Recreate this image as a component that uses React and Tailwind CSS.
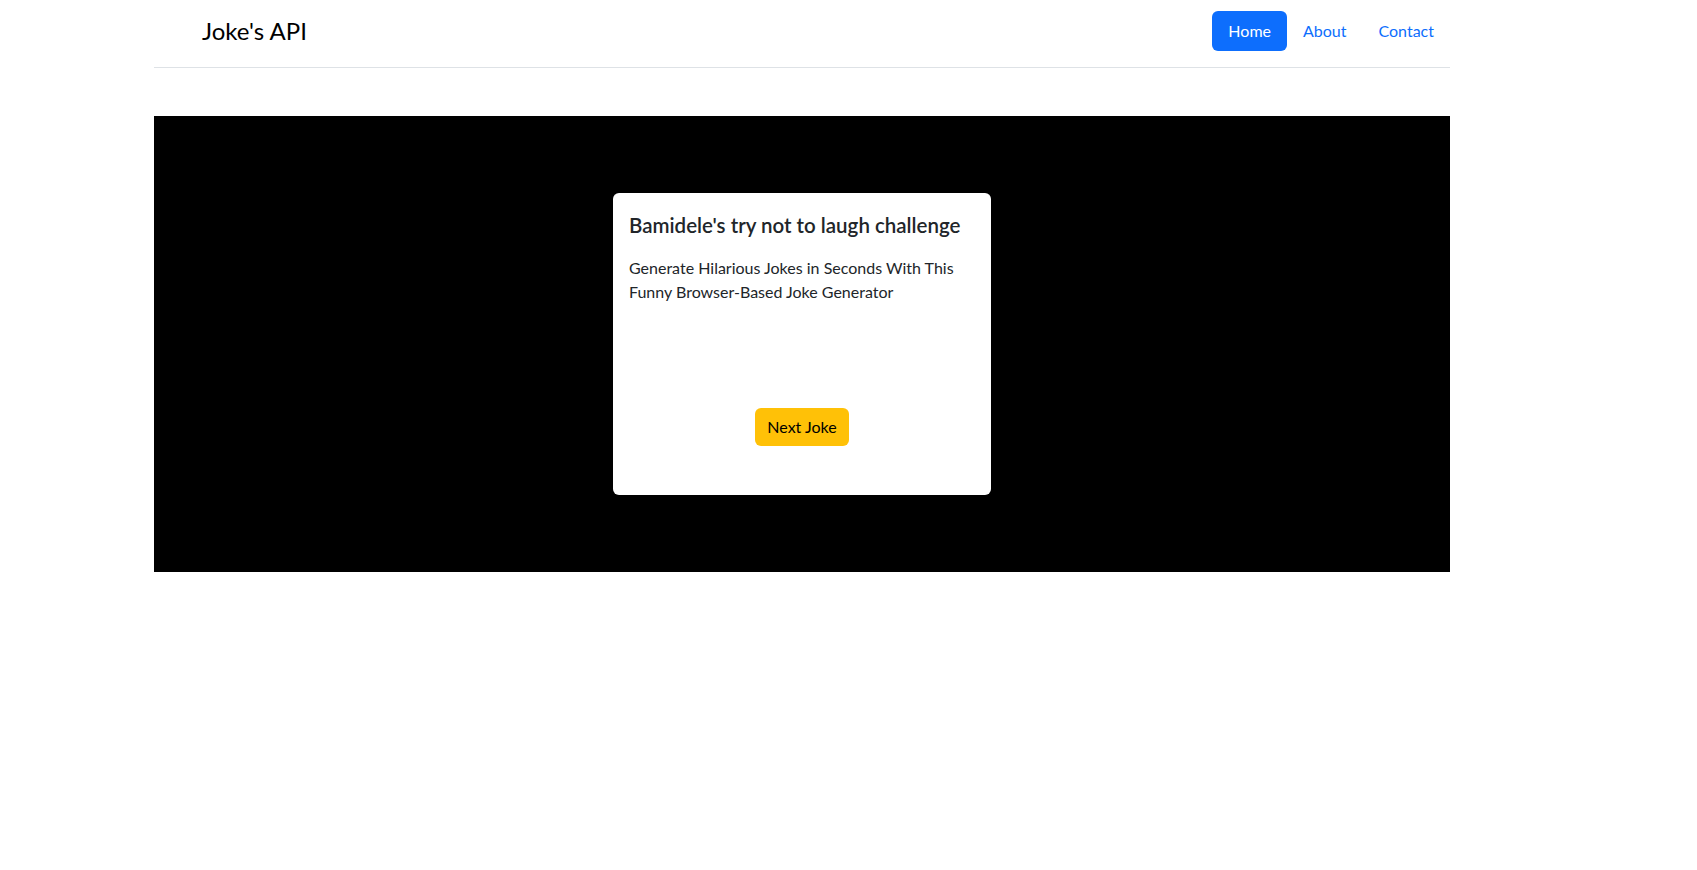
import React from 'react';

const font = { fontFamily: '"Lato", "Open Sans", sans-serif' };

const App = () => {
  return (
    <div className="min-h-[870px] bg-white text-[#212529]" style={font}>
      <div className="ml-[154px] w-[1296px]">
        {/* Cabecera */}
        <header className="flex items-center justify-between pt-[11px] pb-4 border-b border-[#dee2e6]">
          <span className="ml-12 text-[24px] leading-[36px] text-black">Joke's API</span>
          <nav className="flex items-center">
            <a className="px-4 py-2 text-[16px] leading-6 text-white bg-[#0d6efd] rounded-md">Home</a>
            <a className="px-4 py-2 text-[16px] leading-6 text-[#0d6efd]">About</a>
            <a className="px-4 py-2 text-[16px] leading-6 text-[#0d6efd]">Contact</a>
          </nav>
        </header>

        {/* Bloque principal */}
        <section className="mt-12 h-[456px] bg-black flex items-center justify-center">
          <div className="w-[378px] h-[302px] bg-white rounded-md px-4 pt-[20px] flex flex-col">
            <h5 className="text-[20.5px] leading-6 font-semibold text-[#212529] mb-[19px]">
              Bamidele's try not to laugh challenge
            </h5>
            <p className="text-[16px] leading-6 text-[#212529]">
              Generate Hilarious Jokes in Seconds With This Funny Browser-Based Joke Generator
            </p>
            <div className="flex justify-center mt-[104px]">
              <button className="px-3 py-[7px] text-[16px] leading-6 text-black bg-[#ffc107] rounded-md">
                Next Joke
              </button>
            </div>
          </div>
        </section>
      </div>
    </div>
  );
};

export default App;
